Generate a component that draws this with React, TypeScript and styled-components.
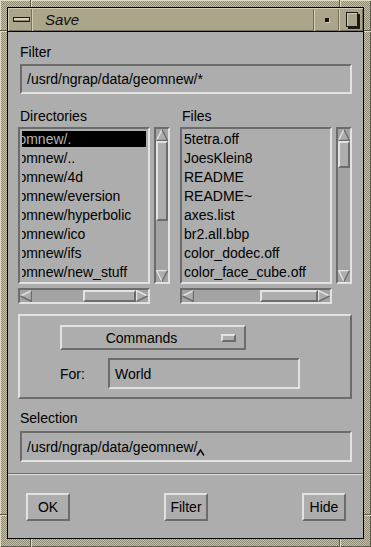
import React from "react";
import styled, { createGlobalStyle, css } from "styled-components";

const BG = "#adadad";
const TROUGH = "#a3a3a3";
const LIGHT = "#e2e2e2";
const DARK = "#6c6c6c";
const TAN = "#aba58c";
const TAN_LIGHT = "#d2ccb2";
const TAN_DARK = "#75715d";

const GlobalStyle = createGlobalStyle`
  html, body { margin: 0; padding: 0; background: #000; }
  body { font-family: "Liberation Sans", Arial, sans-serif; color: #000; }
  * { box-sizing: border-box; }
`;

const raised = css`
  border-style: solid;
  border-width: 2px;
  border-color: ${LIGHT} ${DARK} ${DARK} ${LIGHT};
`;

const sunken = css`
  border-style: solid;
  border-width: 2px;
  border-color: ${DARK} ${LIGHT} ${LIGHT} ${DARK};
`;

const Window = styled.div`
  position: relative;
  width: 371px;
  height: 547px;
  padding: 7px 7px 8px 7px;
  background-color: #aea88f;
  background-image: repeating-conic-gradient(#c6c0a7 0 25%, #8f8a74 0 50%);
  background-size: 2px 2px;
  box-shadow: inset 1px 1px 0 #e0dac0, inset -1px -1px 0 #5e5a4a;
  display: flex;
  flex-direction: column;
`;

const Notch = styled.span<{ $vertical?: boolean; $x?: number; $y?: number; $right?: boolean; $bottom?: boolean }>`
  position: absolute;
  ${(p) =>
    p.$vertical
      ? css`
          width: 2px;
          height: ${p.$bottom ? 8 : 7}px;
          ${p.$bottom ? "bottom: 0;" : "top: 0;"}
          left: ${p.$x}px;
          border-left: 1px solid #5e5a4a;
          border-right: 1px solid #e0dac0;
        `
      : css`
          height: 2px;
          width: 7px;
          ${p.$right ? "right: 0;" : "left: 0;"}
          top: ${p.$y}px;
          border-top: 1px solid #5e5a4a;
          border-bottom: 1px solid #e0dac0;
        `}
`;

const Inner = styled.div`
  flex: 1;
  border: 1px solid #000;
  display: flex;
  flex-direction: column;
  min-height: 0;
`;

const TitleBar = styled.div`
  height: 24px;
  display: flex;
  background: ${TAN};
  border-bottom: 1px solid #000;
`;

const TitleSeg = styled.div<{ $w?: number }>`
  ${(p) => (p.$w ? `width: ${p.$w}px;` : "flex: 1;")}
  height: 23px;
  display: flex;
  align-items: center;
  justify-content: center;
  box-shadow: inset 1px 1px 0 ${TAN_LIGHT}, inset -1px -1px 0 ${TAN_DARK};
`;

const TitleText = styled.div`
  flex: 1;
  padding-left: 13px;
  font-size: 15px;
  font-style: italic;
  color: #111;
  line-height: 23px;
`;

const MenuBar = styled.span`
  width: 17px;
  height: 5px;
  margin-left: 2px;
  border: 1px solid #1a1a1a;
  background: #d6d0b6;
  box-shadow: inset 0 -1px 0 #8c8770;
`;

const Dot = styled.span`
  width: 4px;
  height: 4px;
  margin-left: 1px;
  margin-top: 1px;
  background: #151515;
  box-shadow: 1px 1px 0 ${TAN_LIGHT};
`;

const MaxBox = styled.span`
  width: 12px;
  height: 15px;
  margin-left: 1px;
  margin-top: -1px;
  border: 1px solid #1a1a1a;
  background: ${TAN};
  box-shadow: 2px 2px 0 #1a1a1a, inset 1px 1px 0 ${TAN_LIGHT};
`;

const Client = styled.div`
  flex: 1;
  background: ${BG};
  display: flex;
  flex-direction: column;
  padding-top: 12px;
`;

const Label = styled.div<{ $mt?: number; $indent?: number }>`
  font-size: 14px;
  line-height: 16px;
  height: 16px;
  margin-top: ${(p) => p.$mt ?? 0}px;
  padding-left: ${(p) => p.$indent ?? 0}px;
  white-space: nowrap;
`;

const TextField = styled.div<{ $h?: number; $w?: number }>`
  ${sunken};
  height: ${(p) => p.$h ?? 30}px;
  ${(p) => (p.$w ? `width: ${p.$w}px;` : "")}
  display: flex;
  align-items: center;
  padding-left: 5px;
  font-size: 14px;
  white-space: nowrap;
  overflow: hidden;
`;

const FieldBlock = styled.div<{ $mt?: number }>`
  margin: ${(p) => p.$mt ?? 0}px 11px 0 12px;
`;

const ListsRow = styled.div`
  display: flex;
  gap: 9px;
  padding-left: 10px;
  margin-top: 14px;
`;

const Column = styled.div<{ $w: number }>`
  width: ${(p) => p.$w}px;
  display: flex;
  flex-direction: column;
`;

const ListLine = styled.div`
  display: flex;
  gap: 4px;
  margin-top: 3px;
  height: 157px;
`;

const ListBox = styled.div<{ $w: number }>`
  ${sunken};
  width: ${(p) => p.$w}px;
  height: 157px;
  padding: 2px;
  overflow: hidden;
  display: flex;
  flex-direction: column;
  gap: 3px;
`;

const Row = styled.div<{ $selected?: boolean }>`
  height: 16px;
  line-height: 16px;
  font-size: 14px;
  white-space: nowrap;
  overflow: hidden;
  flex-shrink: 0;
  background: ${(p) => (p.$selected ? "#000" : "transparent")};
  color: ${(p) => (p.$selected ? "#b4b4b4" : "#000")};
`;

const Scrolled = styled.span<{ $shift: number }>`
  display: inline-block;
  margin-left: ${(p) => -p.$shift}px;
`;

const VTrough = styled.div`
  ${sunken};
  width: 16px;
  height: 157px;
  background: ${TROUGH};
  display: flex;
  flex-direction: column;
`;

const HTrough = styled.div<{ $w: number }>`
  ${sunken};
  width: ${(p) => p.$w}px;
  height: 16px;
  margin-top: 4px;
  background: ${TROUGH};
  display: flex;
`;

const Track = styled.div<{ $horizontal?: boolean }>`
  flex: 1;
  display: flex;
  flex-direction: ${(p) => (p.$horizontal ? "row" : "column")};
`;

const Thumb = styled.div<{ $horizontal?: boolean; $offset: number; $size: number }>`
  ${raised};
  background: ${BG};
  ${(p) =>
    p.$horizontal
      ? css`
          width: ${p.$size}px;
          height: 12px;
          margin-left: ${p.$offset}px;
        `
      : css`
          height: ${p.$size}px;
          width: 12px;
          margin-top: ${p.$offset}px;
        `}
`;

const ArrowSvg = styled.svg`
  display: block;
  flex-shrink: 0;
  width: 12px;
  height: 12px;
`;

type Dir = "up" | "down" | "left" | "right";

const Arrow: React.FC<{ dir: Dir }> = ({ dir }) => {
  let poly = "";
  let light = "";
  let dark = "";
  if (dir === "up") {
    poly = "6,0.5 11.5,11.5 0.5,11.5";
    light = "M0.5 11.5 L6 0.5";
    dark = "M6 0.5 L11.5 11.5 L0.5 11.5";
  } else if (dir === "down") {
    poly = "0.5,0.5 11.5,0.5 6,11.5";
    light = "M6 11.5 L0.5 0.5 L11.5 0.5";
    dark = "M11.5 0.5 L6 11.5";
  } else if (dir === "left") {
    poly = "0.5,6 11.5,0.5 11.5,11.5";
    light = "M0.5 6 L11.5 0.5";
    dark = "M11.5 0.5 L11.5 11.5 L0.5 6";
  } else {
    poly = "0.5,0.5 11.5,6 0.5,11.5";
    light = "M0.5 11.5 L0.5 0.5 L11.5 6";
    dark = "M11.5 6 L0.5 11.5";
  }
  return (
    <ArrowSvg viewBox="0 0 12 12">
      <polygon points={poly} fill={BG} />
      <path d={light} stroke={LIGHT} strokeWidth="1.4" fill="none" />
      <path d={dark} stroke={DARK} strokeWidth="1.4" fill="none" />
    </ArrowSvg>
  );
};

const VScroll: React.FC<{ offset: number; size: number }> = ({ offset, size }) => (
  <VTrough>
    <Arrow dir="up" />
    <Track>
      <Thumb $offset={offset} $size={size} />
    </Track>
    <Arrow dir="down" />
  </VTrough>
);

const HScroll: React.FC<{ width: number; offset: number; size: number }> = ({ width, offset, size }) => (
  <HTrough $w={width}>
    <Arrow dir="left" />
    <Track $horizontal>
      <Thumb $horizontal $offset={offset} $size={size} />
    </Track>
    <Arrow dir="right" />
  </HTrough>
);

const Frame = styled.div`
  ${raised};
  margin: 10px 11px 0 10px;
  height: 85px;
  padding: 9px 0 0 40px;
  display: flex;
  flex-direction: column;
`;

const OptionButton = styled.div`
  ${raised};
  width: 186px;
  height: 25px;
  display: flex;
  align-items: center;
  padding-right: 8px;
  font-size: 14px;
`;

const OptionLabel = styled.span`
  flex: 1;
  text-align: center;
`;

const Indicator = styled.span`
  ${raised};
  width: 15px;
  height: 8px;
  margin-top: 1px;
`;

const ForRow = styled.div`
  display: flex;
  align-items: center;
  margin-top: 8px;
`;

const ForLabel = styled.span`
  width: 48px;
  font-size: 14px;
`;

const Separator = styled.div`
  margin-top: 11px;
  border-top: 1px solid ${DARK};
  border-bottom: 1px solid ${LIGHT};
`;

const ButtonRow = styled.div`
  display: flex;
  justify-content: space-between;
  padding: 0 17px 0 18px;
  margin-top: 18px;
`;

const PushButton = styled.div`
  ${raised};
  width: 44px;
  height: 28px;
  display: flex;
  align-items: center;
  justify-content: center;
  font-size: 14px;
`;

const Caret = styled.svg`
  width: 9px;
  height: 7px;
  margin-left: -1px;
  align-self: flex-end;
  margin-bottom: 4px;
`;

const dirs = [
  "/usrd/ngrap/data/geomnew/.",
  "/usrd/ngrap/data/geomnew/..",
  "/usrd/ngrap/data/geomnew/4d",
  "/usrd/ngrap/data/geomnew/eversion",
  "/usrd/ngrap/data/geomnew/hyperbolic",
  "/usrd/ngrap/data/geomnew/ico",
  "/usrd/ngrap/data/geomnew/ifs",
  "/usrd/ngrap/data/geomnew/new_stuff",
];

const files = [
  "5tetra.off",
  "JoesKlein8",
  "README",
  "README~",
  "axes.list",
  "br2.all.bbp",
  "color_dodec.off",
  "color_face_cube.off",
];

export default function App() {
  return (
    <>
      <GlobalStyle />
      <Window>
        <Notch $vertical $x={30} />
        <Notch $vertical $x={339} />
        <Notch $vertical $bottom $x={30} />
        <Notch $vertical $bottom $x={339} />
        <Notch $y={30} />
        <Notch $y={30} $right />
        <Notch $y={514} />
        <Notch $y={514} $right />
        <Inner>
          <TitleBar>
            <TitleSeg $w={24}>
              <MenuBar />
            </TitleSeg>
            <TitleSeg>
              <TitleText>Save</TitleText>
            </TitleSeg>
            <TitleSeg $w={25}>
              <Dot />
            </TitleSeg>
            <TitleSeg $w={24}>
              <MaxBox />
            </TitleSeg>
          </TitleBar>
          <Client>
            <Label $indent={12}>Filter</Label>
            <FieldBlock $mt={4}>
              <TextField>/usrd/ngrap/data/geomnew/*</TextField>
            </FieldBlock>

            <ListsRow>
              <Column $w={153}>
                <Label $indent={2}>Directories</Label>
                <ListLine>
                  <ListBox $w={132}>
                    {dirs.map((d, i) => (
                      <Row key={d} $selected={i === 0}>
                        <Scrolled $shift={125}>{d}</Scrolled>
                      </Row>
                    ))}
                  </ListBox>
                  <VScroll offset={0} size={80} />
                </ListLine>
                <HScroll width={132} offset={51} size={53} />
              </Column>
              <Column $w={172}>
                <Label $indent={2}>Files</Label>
                <ListLine>
                  <ListBox $w={152}>
                    {files.map((f) => (
                      <Row key={f}>{f}</Row>
                    ))}
                  </ListBox>
                  <VScroll offset={0} size={27} />
                </ListLine>
                <HScroll width={152} offset={66} size={58} />
              </Column>
            </ListsRow>

            <Frame>
              <OptionButton>
                <OptionLabel>Commands</OptionLabel>
                <Indicator />
              </OptionButton>
              <ForRow>
                <ForLabel>For:</ForLabel>
                <TextField $h={31} $w={192}>World</TextField>
              </ForRow>
            </Frame>

            <Label $indent={12} $mt={11}>Selection</Label>
            <FieldBlock $mt={5}>
              <TextField $h={31}>
                /usrd/ngrap/data/geomnew/
                <Caret viewBox="0 0 9 7">
                  <path d="M1 6.5 L4.5 1 L8 6.5" stroke="#000" strokeWidth="1.4" fill="none" />
                </Caret>
              </TextField>
            </FieldBlock>

            <Separator />

            <ButtonRow>
              <PushButton>OK</PushButton>
              <PushButton>Filter</PushButton>
              <PushButton>Hide</PushButton>
            </ButtonRow>
          </Client>
        </Inner>
      </Window>
    </>
  );
}
